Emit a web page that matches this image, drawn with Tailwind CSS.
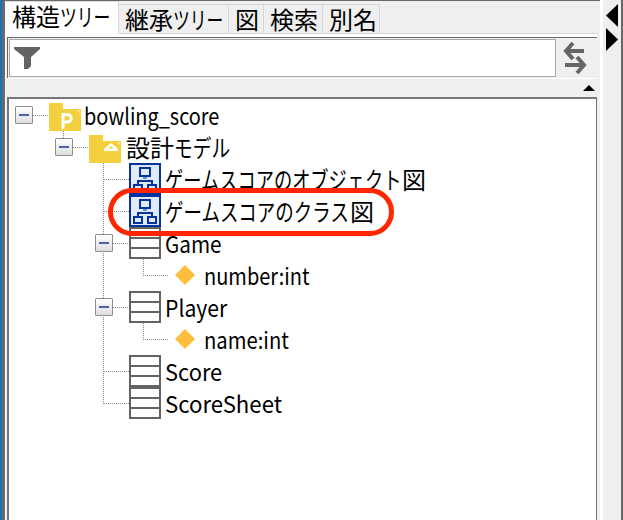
<!DOCTYPE html>
<html lang="ja"><head><meta charset="utf-8"><title>構造ツリー</title>
<script src="https://cdn.jsdelivr.net/npm/@tailwindcss/browser@4"></script></head>
<body class="w-[623px] h-[520px] overflow-hidden bg-[#efefef] text-black font-['Noto_Sans_CJK_JP',sans-serif] text-[24px] leading-[32px]">
<svg class="hidden">
  <symbol id="diagram" viewBox="0 0 32 32"><path fill="#dfe9fa" stroke="#0432a0" stroke-width="2" d="M1 1h30v30H1z"/><path fill="none" stroke="#0432a0" stroke-width="2" d="M11 5h10v8H11zM5 22h8v6H5zM19 22h8v6h-8zM9 22v-4h14v4"/><path fill="#7090c8" d="M14 14h4v2h-4z"/></symbol>
  <symbol id="class" viewBox="0 0 32 32"><path fill="#fff" stroke="#636363" stroke-width="2" d="M1 1h30v30H1zM1 11h30M1 21h30"/></symbol>
  <symbol id="attr" viewBox="0 0 20 20"><path fill="#ffbf3c" d="M10 0L20 10L10 20L0 10z"/></symbol>
</svg>
<div class="flex h-full">
  <div class="w-[2px] bg-[#1c73b4]"></div>
  <div class="w-[3px] bg-[#6b6869]"></div>
  <div class="w-[595px] shrink-0 flex flex-col border-t border-[#6b6869]">
   <div class="flex flex-1">
    <main class="w-[595px] shrink-0 flex flex-col border-l border-white">
      <nav class="relative flex h-[33px] items-end border-b border-[#d6d6d6] w-[592px] whitespace-nowrap">
        <div class="flex w-[113px] h-[33px] -mb-px bg-white border-t border-r border-[#d9d9d9] pl-[6px] leading-[28px]"><span>構造</span><span class="w-[52px]"><span class="inline-block origin-left scale-x-[.7]">ツリー</span></span></div>
        <div class="flex w-[110px] h-[29px] border-t border-r border-[#d6d6d6] pl-[6px] leading-[28px]"><span>継承</span><span class="w-[52px]"><span class="inline-block origin-left scale-x-[.7]">ツリー</span></span></div>
        <div class="w-[35px] h-[29px] border-t border-r border-[#d6d6d6] pl-[6px] leading-[28px]">図</div>
        <div class="w-[59px] h-[29px] border-t border-r border-[#d6d6d6] pl-[6px] leading-[28px]">検索</div>
        <div class="w-[57px] h-[29px] border-t border-r border-[#d6d6d6] pl-[6px] leading-[28px]">別名</div>
      </nav>
      <div class="w-[591px] h-[3px] bg-white"></div>
      <div class="w-[590px] h-[41px] ml-px flex border-t border-l border-[#6b6869]">
        <div class="w-[547px] h-[38px] mt-px ml-px border border-[#a8a8a8] bg-white">
          <svg class="ml-[4px] mt-[7px] w-[27px] h-[23px]" viewBox="0 0 27 23"><path fill="#636363" d="M0 0h26v2L17 10v9l-3 3h-4V10L0 2z"/></svg>
        </div>
        <svg class="ml-[6px] mt-[3px] w-[28px] h-[34px]" viewBox="0 0 28 34" fill="none" stroke="#666" stroke-width="4"><path d="M11 2L4 10L11 18M4 10H22M15 16L22 24L15 32M3 24H22"/></svg>
      </div>
      <div class="ml-px w-[591px] h-px bg-white"></div>
      <div class="ml-px w-[590px] h-[18px] flex justify-end items-center pr-[2px]"><svg class="w-[12px] h-[6px]" viewBox="0 0 12 6"><path d="M6 0L12 6H0z"/></svg></div>
      <section class="relative flex-1 ml-px w-[590px] bg-white border-t-2 border-l-2 border-r border-[#77777d] text-[23px] whitespace-nowrap">
        <svg class="absolute left-[-9px] top-[-99px] w-[300px] h-[430px]" fill="none" stroke="#888" stroke-dasharray="1 1"><path d="M33 115.500H49M63.500 131V138M73 147.500H89M103.500 163V404M104 179.500H129M104 211.500H129M113 243.500H129M113 307.500H129M104 371.500H129M104 403.500H129M143.500 259V276M143 275.500H168M143.500 323V340M143 339.500H168"/></svg>
        <div class="relative">
          <div class="h-8 flex items-center pl-[6px]">
            <i class="w-[18px] h-[18px] mt-0 border border-[#8f8f8f] rounded-[1px] bg-linear-to-b from-white to-[#dedede] flex items-center justify-center"><b class="w-[10px] h-[2px] bg-[#4b62a8]"></b></i>
            <svg class="ml-4 mt-1 w-8 h-7" viewBox="0 0 32 28"><path fill="#f4d03f" d="M0 0h14v6h18v22H0z"/><path fill="none" stroke="#fff" stroke-width="3" d="M14 26V11.500H18C23.500 11.500 23.500 19 18 19H14"/><path stroke="#fff" d="M28.500 7L31 9.500"/></svg>
            <span class="ml-[3px] origin-left scale-x-[.865]">bowling_score</span>
          </div>
          <div class="h-8 flex items-center pl-[46px]">
            <i class="w-[18px] h-[18px] border border-[#8f8f8f] rounded-[1px] bg-linear-to-b from-white to-[#dedede] flex items-center justify-center"><b class="w-[10px] h-[2px] bg-[#4b62a8]"></b></i>
            <svg class="ml-4 mt-1 w-8 h-7" viewBox="0 0 32 28"><path fill="#f4d03f" d="M0 0h14v6h18v22H0z"/><path fill="#fff" fill-rule="evenodd" d="M22 8L29 14V16H15V14zM22 11L19.500 13.500H24.500z"/><path stroke="#fff" d="M28.500 7L31 9.500"/></svg>
            <span class="ml-[5px] text-[24px] flex"><span>設計</span><span class="w-[58px]"><span class="inline-block origin-left scale-x-[.78]">モデル</span></span></span>
          </div>
          <div class="h-8 flex items-center pl-[120px]"><svg class="w-8 h-8"><use href="#diagram"/></svg><span class="ml-[4px] text-[24px] flex"><span class="w-[237px]"><span class="inline-block origin-left scale-x-[.76]">ゲームスコアのオブジェクト</span></span><span>図</span></span></div>
          <div class="h-8 flex items-center pl-[120px]"><svg class="w-8 h-8"><use href="#diagram"/></svg><span class="ml-[4px] text-[24px] flex"><span class="w-[185px]"><span class="inline-block origin-left scale-x-[.77]">ゲームスコアのクラス</span></span><span>図</span></span></div>
          <div class="h-8 flex items-center pl-[86px]"><i class="w-[18px] h-[18px] border border-[#8f8f8f] rounded-[1px] bg-linear-to-b from-white to-[#dedede] flex items-center justify-center"><b class="w-[10px] h-[2px] bg-[#4b62a8]"></b></i><svg class="ml-4 w-8 h-8"><use href="#class"/></svg><span class="ml-[4px] origin-left scale-x-[.9]">Game</span></div>
          <div class="h-8 flex items-center pl-[166px]"><svg class="w-5 h-5"><use href="#attr"/></svg><span class="ml-[9px] origin-left scale-x-[.87]">number:int</span></div>
          <div class="h-8 flex items-center pl-[86px]"><i class="w-[18px] h-[18px] border border-[#8f8f8f] rounded-[1px] bg-linear-to-b from-white to-[#dedede] flex items-center justify-center"><b class="w-[10px] h-[2px] bg-[#4b62a8]"></b></i><svg class="ml-4 w-8 h-8"><use href="#class"/></svg><span class="ml-[4px] origin-left scale-x-[.92]">Player</span></div>
          <div class="h-8 flex items-center pl-[166px]"><svg class="w-5 h-5"><use href="#attr"/></svg><span class="ml-[9px] origin-left scale-x-[.88]">name:int</span></div>
          <div class="h-8 flex items-center pl-[120px]"><svg class="w-8 h-8"><use href="#class"/></svg><span class="ml-[4px] origin-left scale-x-[.95]">Score</span></div>
          <div class="h-8 flex items-center pl-[120px]"><svg class="w-8 h-8"><use href="#class"/></svg><span class="ml-[4px] origin-left scale-x-[.965]">ScoreSheet</span></div>
        </div>
        <div class="absolute left-[99px] top-[89px] w-[286px] h-[48px] border-[5px] border-[#ff2600] rounded-full"></div>
      </section>
    </main>
   </div>
  </div>
  <aside class="w-[21px] shrink-0 bg-[#efefef] border-l-3 border-white pl-[3px] pt-1 flex flex-col gap-px">
    <svg class="w-3 h-[23px]" viewBox="0 0 12 23"><path d="M12 0V23L0 11.500z"/></svg>
    <svg class="w-3 h-[23px]" viewBox="0 0 12 23"><path d="M0 0V23L12 11.500z"/></svg>
  </aside>
  <div class="w-[2px] bg-[#6b6869]"></div>
</div>
</body></html>
